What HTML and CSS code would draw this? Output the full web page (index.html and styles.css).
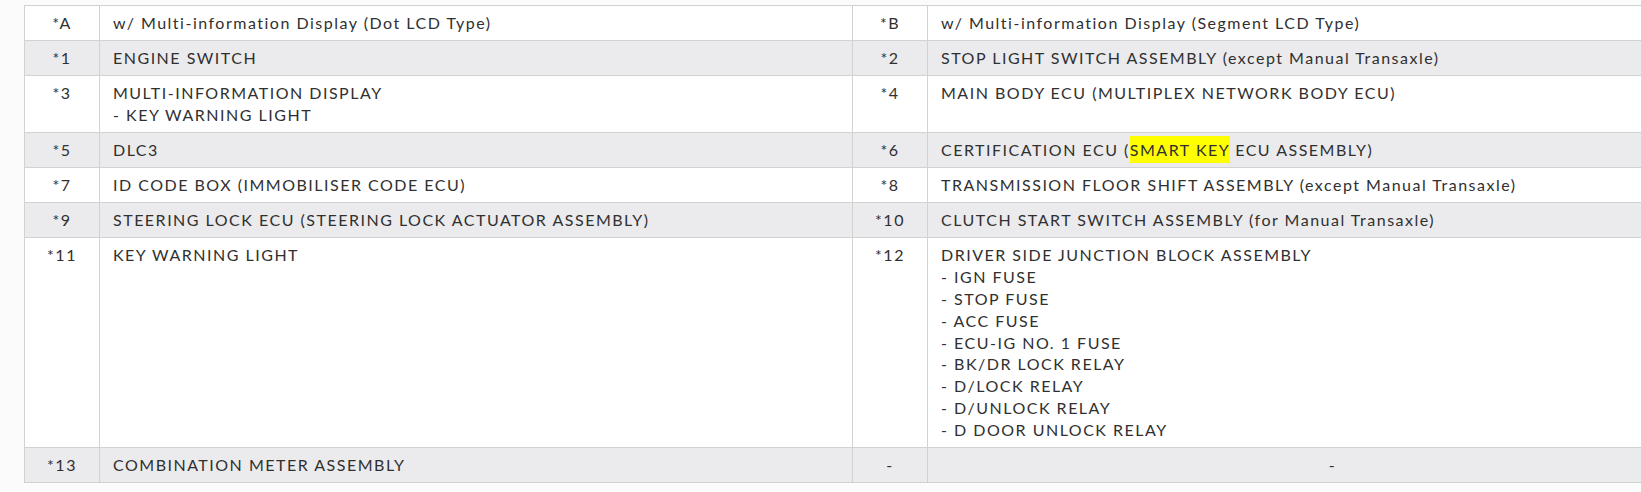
FILE: index.html
```html
<!DOCTYPE html>
<html>
<head>
<meta charset="utf-8">
<link rel="stylesheet" href="styles.css">
</head>
<body>
<div class="page">
<table class="parts">
<colgroup>
<col class="c-num"><col class="c-name"><col class="c-num"><col class="c-name2">
</colgroup>
<tbody>
<tr>
<td class="num">*A</td><td>w/ Multi-information Display (Dot LCD Type)</td>
<td class="num">*B</td><td>w/ Multi-information Display (Segment LCD Type)</td>
</tr>
<tr class="alt">
<td class="num">*1</td><td>ENGINE SWITCH</td>
<td class="num">*2</td><td>STOP LIGHT SWITCH ASSEMBLY (except Manual Transaxle)</td>
</tr>
<tr>
<td class="num">*3</td><td>MULTI-INFORMATION DISPLAY<br>- KEY WARNING LIGHT</td>
<td class="num">*4</td><td>MAIN BODY ECU (MULTIPLEX NETWORK BODY ECU)</td>
</tr>
<tr class="alt">
<td class="num">*5</td><td>DLC3</td>
<td class="num">*6</td><td>CERTIFICATION ECU (<span class="hl">SMART KEY</span> ECU ASSEMBLY)</td>
</tr>
<tr>
<td class="num">*7</td><td>ID CODE BOX (IMMOBILISER CODE ECU)</td>
<td class="num">*8</td><td>TRANSMISSION FLOOR SHIFT ASSEMBLY (except Manual Transaxle)</td>
</tr>
<tr class="alt">
<td class="num">*9</td><td>STEERING LOCK ECU (STEERING LOCK ACTUATOR ASSEMBLY)</td>
<td class="num">*10</td><td>CLUTCH START SWITCH ASSEMBLY (for Manual Transaxle)</td>
</tr>
<tr>
<td class="num">*11</td><td>KEY WARNING LIGHT</td>
<td class="num">*12</td><td>DRIVER SIDE JUNCTION BLOCK ASSEMBLY<br>- IGN FUSE<br>- STOP FUSE<br>- ACC FUSE<br>- ECU-IG NO. 1 FUSE<br>- BK/DR LOCK RELAY<br>- D/LOCK RELAY<br>- D/UNLOCK RELAY<br>- D DOOR UNLOCK RELAY</td>
</tr>
<tr class="alt">
<td class="num">*13</td><td>COMBINATION METER ASSEMBLY</td>
<td class="num">-</td><td class="center">-</td>
</tr>
</tbody>
</table>
</div>
</body>
</html>
```
FILE: styles.css
```css
html, body {
  margin: 0;
  padding: 0;
  overflow: hidden;
  background: #fbfbfb;
}
.page {
  padding: 5px 0 0 24px;
}
.parts {
  border-collapse: collapse;
  table-layout: fixed;
  width: 1713px;
  font-family: "Lato", "Open Sans", sans-serif;
  font-size: 16px;
  font-weight: 400;
  letter-spacing: 1.5px;
  line-height: 21.9px;
  color: #303030;
  background: #fff;
}
.c-num { width: 75px; }
.c-name { width: 753px; }
.c-name2 { width: 810px; }
.parts td {
  border: 1px solid #d2d2d2;
  padding: 6.05px 12px 6.05px 13px;
  vertical-align: top;
  text-align: left;
}
.parts td.num,
.parts td.center {
  text-align: center;
  padding-left: 4px;
  padding-right: 4px;
}
.parts tr.alt td {
  background: #ebebed;
}
.hl {
  background: #ffff00;
  padding: 4px 0;
}
```
